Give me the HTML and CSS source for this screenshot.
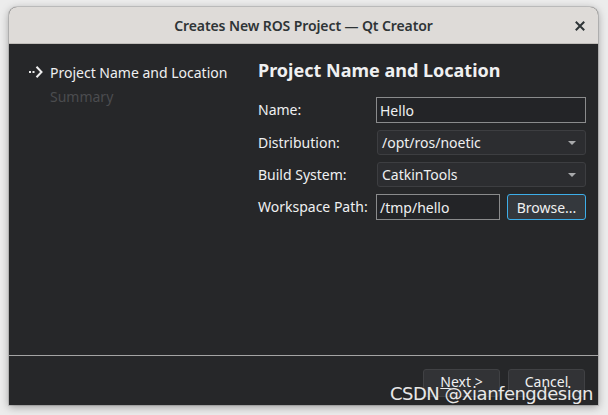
FILE: index.html
```html
<!DOCTYPE html>
<html>
<head>
<meta charset="utf-8">
<link rel="stylesheet" href="styles.css">
</head>
<body>
<div class="window">
  <div class="titlebar">
    <span class="title">Creates New ROS Project — Qt Creator</span>
    <svg class="close" width="10" height="10" viewBox="0 0 10 10"><path d="M1.5 1.5 L8.5 8.5 M8.5 1.5 L1.5 8.5" stroke="#2e3436" stroke-width="2" stroke-linecap="square"/></svg>
  </div>
  <div class="content">
    <div class="main">
      <div class="sidebar">
        <div class="step current">
          <svg class="arrow" width="16" height="14" viewBox="0 0 16 14"><rect x="1" y="6" width="2" height="2" fill="#eeeeee"/><rect x="4.5" y="6" width="2" height="2" fill="#eeeeee"/><path d="M8.5 1.8 L13.5 7 L8.5 12.2" fill="none" stroke="#eeeeee" stroke-width="2"/></svg>
          <span>Project Name and Location</span>
        </div>
        <div class="step muted">Summary</div>
      </div>
      <div class="page">
        <h1 class="heading">Project Name and Location</h1>
        <div class="form">
          <label class="lbl">Name:</label>
          <div class="field">Hello</div>
          <label class="lbl">Distribution:</label>
          <div class="combo"><span>/opt/ros/noetic</span><span class="caret"></span></div>
          <label class="lbl">Build System:</label>
          <div class="combo"><span>CatkinTools</span><span class="caret"></span></div>
          <label class="lbl">Workspace Path:</label>
          <div class="pathrow">
            <div class="field path">/tmp/hello</div>
            <button class="btn focus">Browse...</button>
          </div>
        </div>
      </div>
    </div>
    <div class="footer">
      <button class="btn wide"><span class="u">N</span>ext &gt;</button>
      <button class="btn wide">Cancel</button>
    </div>
  </div>
</div>
<div class="watermark">CSDN @xianfengdesign</div>
</body>
</html>
```
FILE: styles.css
```css
html, body {
  margin: 0;
  padding: 0;
}
body {
  width: 608px;
  height: 415px;
  background: #ececec;
  overflow: hidden;
  position: relative;
  font-family: "Noto Sans", "Open Sans", sans-serif;
}
.window {
  margin: 7px 0 0 9px;
  width: 589px;
  height: 398px;
  display: flex;
  flex-direction: column;
  border-radius: 8px 8px 0 0;
  box-shadow: 0 2px 8px rgba(0,0,0,0.35), 0 0 0 1px rgba(0,0,0,0.12);
  background: #262729;
}
.titlebar {
  height: 37px;
  flex: none;
  background: #dedbd8;
  border-radius: 8px 8px 0 0;
  border-bottom: 1px solid #c0bdb9;
  box-sizing: border-box;
  display: flex;
  align-items: center;
  justify-content: center;
  position: relative;
  color: #2e3436;
}
.title {
  font-size: 14px;
  font-weight: 600;
  letter-spacing: -0.1px;
}
.close {
  position: absolute;
  right: 13px;
  top: 14px;
}
.content {
  flex: 1;
  display: flex;
  flex-direction: column;
  color: #eff0f1;
  font-size: 14px;
}
.main {
  flex: 1;
  display: flex;
  border-bottom: 1px solid #a4a4a4;
}
.sidebar {
  width: 249px;
  flex: none;
  padding: 16px 0 0 19px;
  box-sizing: border-box;
}
.step {
  height: 24px;
  display: flex;
  align-items: center;
}
.step.current span { margin-left: 6px; }
.arrow { display: block; }
.step.muted {
  color: #4b4c4f;
  padding-left: 22px;
}
.page {
  flex: 1;
  padding-top: 14px;
}
.heading {
  margin: 0 0 15px 0;
  font-size: 18px;
  font-weight: 700;
  color: #eff0f1;
  line-height: 24px;
}
.form {
  display: grid;
  grid-template-columns: 118px 210px;
  row-gap: 7px;
  align-items: center;
}
.lbl { line-height: 18px; }
.field {
  height: 26px;
  box-sizing: border-box;
  border: 1px solid #8a8b8c;
  background: #232427;
  padding: 0 3px;
  display: flex;
  align-items: center;
}
.combo {
  height: 25px;
  margin-left: 1px;
  box-sizing: border-box;
  border: 1px solid #3d3e41;
  border-radius: 3px;
  background: #2c2d30;
  padding: 0 4px;
  display: flex;
  align-items: center;
  justify-content: space-between;
}
.caret {
  width: 0;
  height: 0;
  border-left: 4px solid transparent;
  border-right: 4px solid transparent;
  border-top: 4px solid #a8a9ab;
  margin-right: 5px;
}
.pathrow {
  display: flex;
  gap: 7px;
}
.path { width: 124px; }
.btn {
  font-family: inherit;
  font-size: 14px;
  color: #eff0f1;
  background: #323336;
  border: 1px solid #404144;
  border-radius: 3px;
  height: 26px;
  padding: 0;
  box-sizing: border-box;
}
.btn.focus {
  width: 79px;
  border-color: #3daee9;
  background: #34383d;
}
.footer {
  height: 49px;
  flex: none;
  display: flex;
  justify-content: flex-end;
  align-items: flex-start;
  gap: 8px;
  padding: 13px 13px 0 0;
  box-sizing: border-box;
}
.btn.wide { width: 77px; height: 28px; padding-bottom: 4px; }
.u { text-decoration: underline; }
.watermark {
  position: absolute;
  right: 15px;
  top: 383px;
  font-family: "DejaVu Sans", sans-serif;
  font-size: 18px;
  color: #e8e8e8;
  letter-spacing: -0.5px;
  line-height: 22px;
  text-shadow: 0 0 1px #333;
}
```
